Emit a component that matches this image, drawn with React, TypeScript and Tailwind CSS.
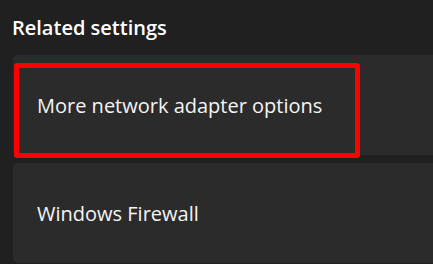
export default function App() {
  const rows = ["More network adapter options", "Windows Firewall"];
  return (
    <div
      className="w-[433px] h-[264px] overflow-hidden bg-[#202020] text-white pl-[13px]"
      style={{ fontFamily: '"Open Sans", "Noto Sans", sans-serif' }}
    >
      <h2 className="pt-[14px] -ml-[1px] text-[20px] leading-[28px] font-semibold text-white">
        Related settings
      </h2>
      <div className="mt-[13px] flex flex-col gap-[8px] w-[440px]">
        {rows.map((label, i) => (
          <div
            key={label}
            className="relative h-[100px] rounded-[5px] bg-[#2b2b2b] flex items-center pl-[24px]"
          >
            <span className="pt-[2px] text-[20px] leading-[28px] text-[#f5f5f5]">{label}</span>
            {i === 0 && (
              <div className="absolute left-[1px] top-[8px] w-[346px] h-[95px] border-[5px] border-[#ff0000] rounded-[3px]" />
            )}
          </div>
        ))}
      </div>
    </div>
  );
}
